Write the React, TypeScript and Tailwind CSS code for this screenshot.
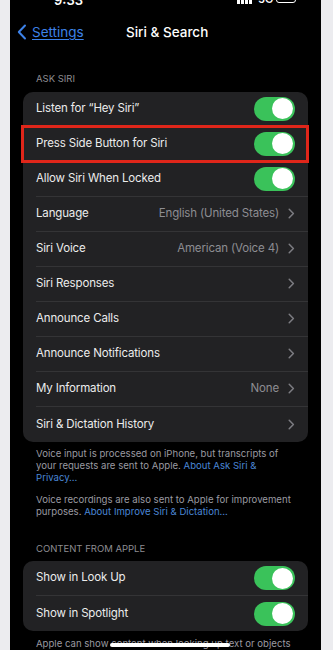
import React from 'react';

type Row = {
  label: string;
  value?: string;
  toggle?: boolean;
  highlight?: boolean;
};

const askSiri: Row[] = [
  { label: 'Listen for “Hey Siri”', toggle: true },
  { label: 'Press Side Button for Siri', toggle: true, highlight: true },
  { label: 'Allow Siri When Locked', toggle: true },
  { label: 'Language', value: 'English (United States)' },
  { label: 'Siri Voice', value: 'American (Voice 4)' },
  { label: 'Siri Responses' },
  { label: 'Announce Calls' },
  { label: 'Announce Notifications' },
  { label: 'My Information', value: 'None' },
  { label: 'Siri & Dictation History' },
];

const contentFromApple: Row[] = [
  { label: 'Show in Look Up', toggle: true },
  { label: 'Show in Spotlight', toggle: true },
];

function Toggle() {
  return (
    <div className="w-[41px] h-[24px] rounded-full bg-[#3ac25a] flex items-center justify-end px-[2px]">
      <div className="w-[21px] h-[21px] rounded-full bg-white" />
    </div>
  );
}

function Chevron() {
  return (
    <svg width="7" height="11" viewBox="0 0 7 11" className="ml-[9px]">
      <path d="M1.2 1.2 5.4 5.5 1.2 9.8" fill="none" stroke="#7c7c82" strokeWidth="1.5" strokeLinecap="round" strokeLinejoin="round" />
    </svg>
  );
}

function SettingsRow({ row, last }: { row: Row; last: boolean }) {
  return (
    <div className="relative h-[35px] flex items-center pl-[13px]">
      <div className={`flex-1 h-full flex items-center pr-[13px] ${last ? '' : 'border-b border-[#343436]'}`}>
        <span className="flex-1 text-[11.5px] tracking-[-0.15px] text-[#ececec]">{row.label}</span>
        {row.toggle ? (
          <Toggle />
        ) : (
          <div className="flex items-center">
            {row.value && <span className="text-[11.5px] tracking-[-0.15px] text-[#8d8d92]">{row.value}</span>}
            <Chevron />
          </div>
        )}
      </div>
      {row.highlight && (
        <div className="absolute left-[-2px] right-[-1px] top-[-2px] bottom-[-1px] border-[3px] border-[#e0261a]" />
      )}
    </div>
  );
}

function Group({ rows }: { rows: Row[] }) {
  return (
    <div className="mx-[13px] rounded-[10px] bg-[#222224]">
      {rows.map((r, i) => (
        <SettingsRow key={r.label} row={r} last={i === rows.length - 1} />
      ))}
    </div>
  );
}

export default function App() {
  return (
    <div
      className="w-[333px] h-[650px] overflow-hidden bg-[#ececef] flex"
      style={{ fontFamily: 'Inter, "Liberation Sans", sans-serif' }}
    >
      <div className="ml-[10px] w-[311px] h-full bg-black flex flex-col relative">
        {/* status bar, mostly cut off */}
        <div className="h-[6px] overflow-hidden relative">
          <span className="absolute left-[44px] top-[-9px] text-[13px] font-semibold text-white">9:33</span>
          <div className="absolute left-[227px] top-[-4px] flex items-end gap-[1px]">
            <div className="w-[3px] h-[8px] bg-white" />
            <div className="w-[3px] h-[8px] bg-white" />
            <div className="w-[3px] h-[8px] bg-white" />
            <div className="w-[3px] h-[8px] bg-white" />
          </div>
          <span className="absolute left-[248px] top-[-9px] text-[11px] font-semibold text-white">5G</span>
          <div className="absolute left-[266px] top-[-6px] w-[20px] h-[9px] rounded-[3px] border border-white" />
        </div>

        {/* nav bar */}
        <div className="h-[54px] flex items-center relative">
          <div className="flex items-center pl-[7px] gap-[5px]">
            <svg width="10" height="16" viewBox="0 0 10 16">
              <path d="M8 1.5 1.8 8 8 14.5" fill="none" stroke="#3d82e8" strokeWidth="2" strokeLinecap="round" strokeLinejoin="round" />
            </svg>
            <span className="text-[13.5px] text-[#3d82e8] underline underline-offset-2">Settings</span>
          </div>
          <span className="absolute left-[116px] text-[13.5px] font-medium text-white">Siri &amp; Search</span>
        </div>

        <div className="pl-[26px] mt-[13px] mb-[6px] text-[9.5px] text-[#8d8d92] uppercase">Ask Siri</div>
        <Group rows={askSiri} />

        <div className="px-[26px] mt-[6px] text-[9.6px] leading-[12px] text-[#9a9aa0]">
          <p>
            Voice input is processed on iPhone, but transcripts of your requests are sent to Apple.{' '}
            <span className="text-[#4a86d6]">About Ask Siri &amp; Privacy…</span>
          </p>
          <p className="mt-[10px]">
            Voice recordings are also sent to Apple for improvement purposes.{' '}
            <span className="text-[#4a86d6]">About Improve Siri &amp; Dictation…</span>
          </p>
        </div>

        <div className="pl-[26px] mt-[24px] mb-[5px] text-[9.5px] text-[#8d8d92] uppercase">Content from Apple</div>
        <Group rows={contentFromApple} />

        <div className="px-[26px] mt-[7px] text-[9.6px] leading-[12px] text-[#9a9aa0] whitespace-nowrap">
          Apple can show content when looking up text or objects
        </div>

        {/* home indicator */}
        <div className="absolute left-[100px] top-[643px] w-[120px] h-[4px] rounded-full bg-white" />
      </div>
    </div>
  );
}
